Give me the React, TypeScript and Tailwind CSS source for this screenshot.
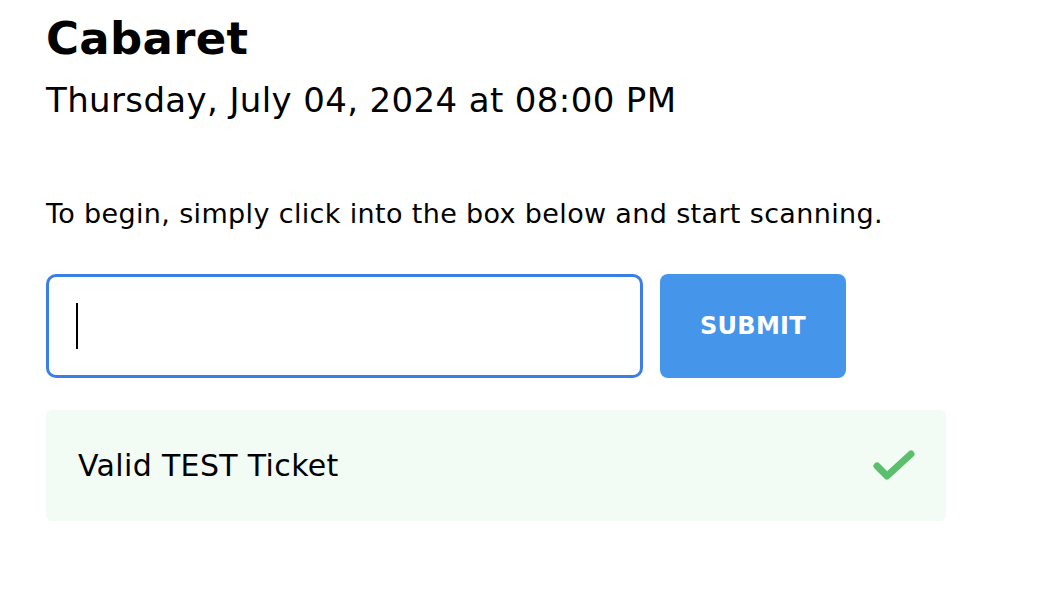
import React, { useState } from 'react';

function CheckMark() {
  return (
    <svg width="44" height="34" viewBox="0 0 44 34" fill="none">
      <path
        d="M5 17 L15 27 L39 5"
        stroke="#5cbf6e"
        strokeWidth="7"
        strokeLinecap="round"
        strokeLinejoin="round"
      />
    </svg>
  );
}

export default function App() {
  const [code, setCode] = useState('');

  return (
    <div
      className="min-h-screen bg-white text-black pl-[46px] pt-[12px]"
      style={{ fontFamily: '"DejaVu Sans", "Noto Sans", sans-serif' }}
    >
      <h1 className="text-[45px] font-bold leading-[54px] tracking-[0.3px]">Cabaret</h1>
      <p className="text-[34px] leading-[44px] mt-[12px] tracking-[0.37px]">Thursday, July 04, 2024 at 08:00 PM</p>

      <p className="text-[27px] leading-[32px] mt-[76px] tracking-[0.35px]">
        To begin, simply click into the box below and start scanning.
      </p>

      {/* Scan form */}
      <form
        className="flex gap-[17px] mt-[44px]"
        onSubmit={(e) => {
          e.preventDefault();
          setCode('');
        }}
      >
        <div className="relative">
          <input
            value={code}
            onChange={(e) => setCode(e.target.value)}
            className="w-[597px] h-[104px] rounded-[10px] border-[3px] border-[#3a7ee8] px-[28px] text-[32px] outline-none"
          />
          {/* caret */}
          <span className="absolute left-[30px] top-[29px] w-[2px] h-[46px] bg-black" />
        </div>
        <button
          type="submit"
          className="w-[186px] h-[104px] rounded-[8px] bg-[#4596ea] text-white text-[24px] font-bold tracking-[0.3px]"
        >
          SUBMIT
        </button>
      </form>

      {/* Result */}
      <div className="w-[900px] h-[111px] mt-[32px] rounded-[6px] bg-[#f2fbf4] flex items-center justify-between pl-[32px] pr-[30px]">
        <span className="text-[30px] leading-[40px] tracking-[0.35px]">Valid TEST Ticket</span>
        <CheckMark />
      </div>
    </div>
  );
}
